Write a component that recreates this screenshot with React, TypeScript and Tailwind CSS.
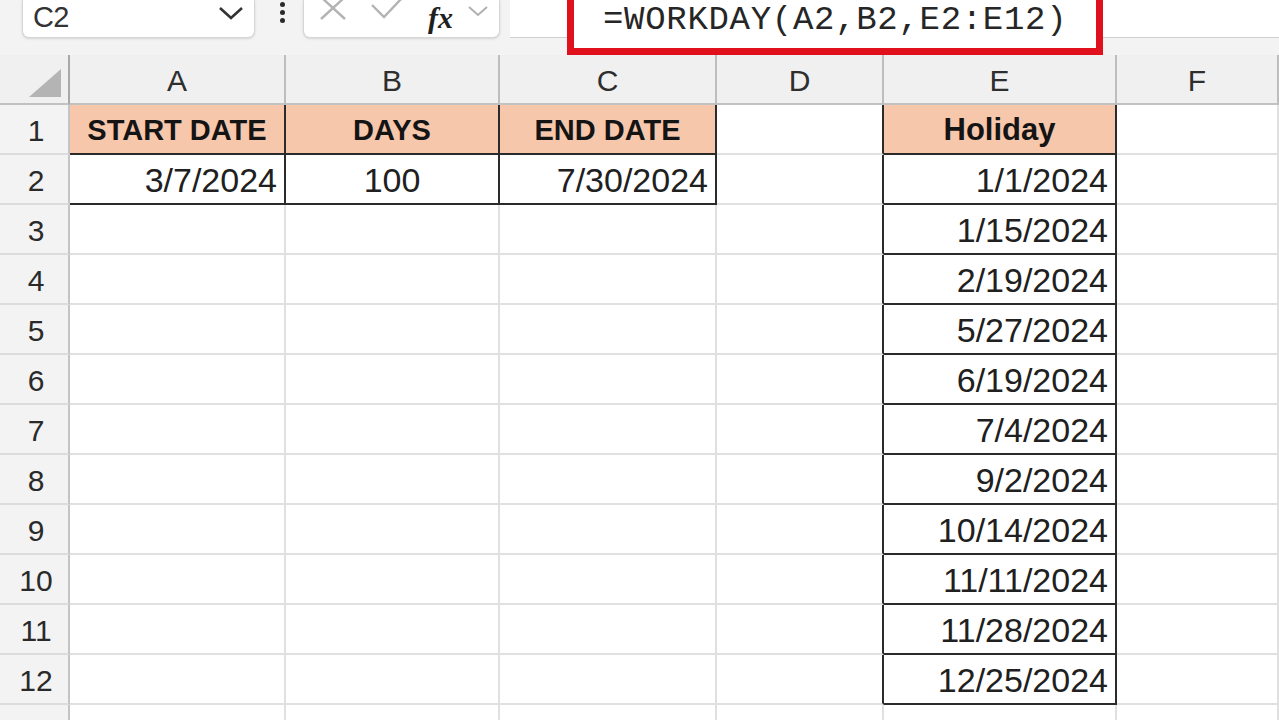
import React from "react";

const holidays = [
  "1/1/2024",
  "1/15/2024",
  "2/19/2024",
  "5/27/2024",
  "6/19/2024",
  "7/4/2024",
  "9/2/2024",
  "10/14/2024",
  "11/11/2024",
  "11/28/2024",
  "12/25/2024",
];

type CellProps = {
  text?: string;
  kind?: "plain" | "head" | "data" | "edge";
  align?: "left" | "center" | "right";
  big?: boolean;
};

function Cell(props: CellProps) {
  const kind = props.kind || "plain";
  let cls = "flex items-center h-[50px] border-r-2 border-b-2 border-[#e0e0e0] overflow-hidden whitespace-nowrap";
  if (kind === "head") {
    cls += " bg-[#f7c7ac] border-r-[#2b2b2b] border-b-[#2b2b2b] font-bold text-[#141414] pt-[3px]";
  } else if (kind === "data") {
    cls += " bg-white border-r-[#2b2b2b] border-b-[#2b2b2b] text-[34px] text-[#202020] pt-[2px]";
  } else if (kind === "edge") {
    cls += " bg-white border-r-[#2b2b2b]";
  } else {
    cls += " bg-white";
  }
  if (kind === "head") {
    cls += props.big ? " text-[31px]" : " text-[29px]";
  }
  if (props.align === "right") cls += " justify-end pr-[7px]";
  if (props.align === "center") cls += " justify-center";
  return <div className={cls}>{props.text}</div>;
}

function RowNum(props: { n?: number }) {
  return (
    <div className="flex items-center justify-center pl-1 pt-[2px] h-[50px] bg-[#f3f3f3] border-r-2 border-b-2 border-r-[#c4c4c4] border-b-[#dcdcdc] text-[30px] text-[#2a2a2a]">
      {props.n}
    </div>
  );
}

function Toolbar() {
  return (
    <div className="relative h-[55px] bg-[#f3f3f3] flex items-start">
      {/* name box */}
      <div className="ml-[22px] w-[233px] h-[38px] bg-white rounded-b-[7px] border-x border-b border-[#d6d6d6] shadow-sm flex items-start justify-between pl-[10px] pr-[10px]">
        <span className="pt-[1px] text-[29px] leading-[1.15] text-[#333] tracking-tight">C2</span>
        <svg width="26" height="16" viewBox="0 0 26 16" className="mt-[5px]">
          <polyline points="2,3 13,13 24,3" fill="none" stroke="#333" strokeWidth="2.6" />
        </svg>
      </div>
      {/* dots */}
      <div className="ml-[22px] w-[10px] flex flex-col items-center gap-[3px] pt-[2px]">
        <span className="w-[5px] h-[5px] rounded-full bg-[#2a2a2a]" />
        <span className="w-[5px] h-[5px] rounded-full bg-[#2a2a2a]" />
        <span className="w-[5px] h-[5px] rounded-full bg-[#2a2a2a]" />
      </div>
      {/* cancel / enter / fx */}
      <div className="ml-[16px] w-[197px] h-[38px] bg-white rounded-b-[7px] border-x border-b border-[#d6d6d6] shadow-sm flex items-start pl-[14px] overflow-hidden">
        <svg width="30" height="24" viewBox="0 0 30 24" className="-mt-[3px]">
          <line x1="3" y1="0" x2="27" y2="22" stroke="#b3b3b3" strokeWidth="2.4" />
          <line x1="27" y1="0" x2="3" y2="22" stroke="#b3b3b3" strokeWidth="2.4" />
        </svg>
        <svg width="34" height="24" viewBox="0 0 34 24" className="ml-[22px] -mt-[3px]">
          <polyline points="2,8 14,20 32,1" fill="none" stroke="#b3b3b3" strokeWidth="2.4" />
        </svg>
        <span className="ml-[24px] pt-[1px] text-[30px] leading-[1.15] italic font-bold text-[#1f1f1f] font-['Liberation_Serif',serif]">
          fx
        </span>
        <svg width="22" height="14" viewBox="0 0 22 14" className="ml-[14px] mt-[4px]">
          <polyline points="2,3 11,11 20,3" fill="none" stroke="#b0b0b0" strokeWidth="2" />
        </svg>
      </div>
      {/* formula input */}
      <div className="ml-[10px] flex-1 h-[38px] bg-white border-b border-[#cfcfcf]" />
      {/* red highlight around the formula */}
      <div className="absolute left-[567px] -top-[12px] w-[536px] h-[67px] border-[7px] border-[#e1101d] bg-white">
        <div className="pl-[29px] pt-[6px] font-['Liberation_Mono',monospace] text-[34px] leading-[1.15] text-[#262626] tracking-[0.7px]">
          =WORKDAY(A2,B2,E2:E12)
        </div>
      </div>
    </div>
  );
}

function ColHead(props: { label: string; first?: boolean }) {
  if (props.first) {
    return (
      <div className="h-[50px] bg-[#f0f0f0] border-r-2 border-b-2 border-r-[#a8a8a8] border-b-[#c2c2c2] flex items-end justify-end pr-[7px] pb-[6px]">
        <svg width="32" height="28" viewBox="0 0 32 28">
          <polygon points="32,0 32,28 0,28" fill="#b4b4b4" />
        </svg>
      </div>
    );
  }
  return (
    <div className="h-[50px] bg-[#f0f0f0] border-r-2 border-b-2 border-r-[#bdbdbd] border-b-[#c2c2c2] flex items-center justify-center pt-[3px] text-[30px] text-[#2e2e2e]">
      {props.label}
    </div>
  );
}

export default function App() {
  const rows = [];
  for (let r = 1; r <= 13; r++) {
    let a = <Cell />;
    let b = <Cell />;
    let c = <Cell />;
    let d = <Cell />;
    let e = <Cell />;
    if (r === 1) {
      a = <Cell kind="head" align="center" text="START DATE" />;
      b = <Cell kind="head" align="center" text="DAYS" />;
      c = <Cell kind="head" align="center" text="END DATE" />;
      d = <Cell kind="edge" />;
      e = <Cell kind="head" align="center" text="Holiday" big />;
    } else if (r <= 12) {
      if (r === 2) {
        a = <Cell kind="data" align="right" text="3/7/2024" />;
        b = <Cell kind="data" align="center" text="100" />;
        c = <Cell kind="data" align="right" text="7/30/2024" />;
      }
      d = <Cell kind="edge" />;
      e = <Cell kind="data" align="right" text={holidays[r - 2]} />;
    }
    rows.push(
      <React.Fragment key={r}>
        {/* row 13 only peeks in at the bottom edge, its number is off screen */}
        <RowNum n={r <= 12 ? r : undefined} />
        {a}
        {b}
        {c}
        {d}
        {e}
        <Cell />
      </React.Fragment>
    );
  }

  return (
    <div className="w-[1279px] h-[720px] overflow-hidden bg-white font-['Liberation_Sans',Arial,sans-serif]">
      <Toolbar />
      <div className="grid grid-cols-[70px_216px_214px_217px_167px_233px_1fr]">
        <ColHead label="" first />
        <ColHead label="A" />
        <ColHead label="B" />
        <ColHead label="C" />
        <ColHead label="D" />
        <ColHead label="E" />
        <ColHead label="F" />
        {rows}
      </div>
    </div>
  );
}
